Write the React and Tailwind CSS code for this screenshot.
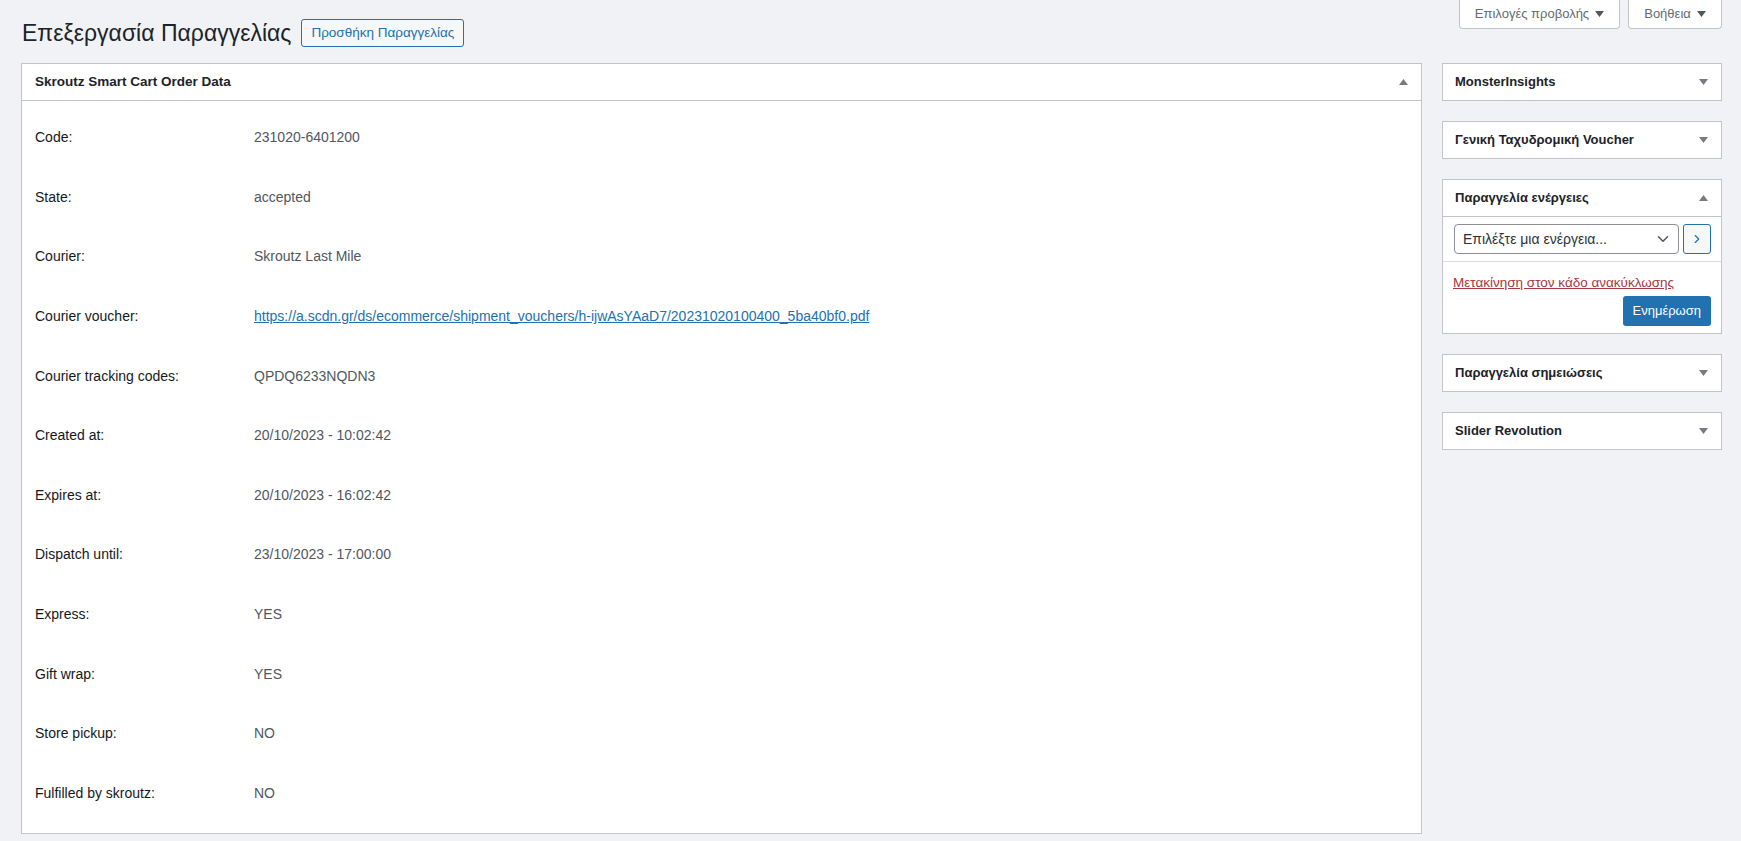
import React from 'react';
import { ChevronDown, ChevronRight } from 'lucide-react';

// Skroutz order data rows
const rows = [
  { label: 'Code:', value: '231020-6401200' },
  { label: 'State:', value: 'accepted' },
  { label: 'Courier:', value: 'Skroutz Last Mile' },
  {
    label: 'Courier voucher:',
    value: 'https://a.scdn.gr/ds/ecommerce/shipment_vouchers/h-ijwAsYAaD7/20231020100400_5ba40bf0.pdf',
    link: true,
  },
  { label: 'Courier tracking codes:', value: 'QPDQ6233NQDN3' },
  { label: 'Created at:', value: '20/10/2023 - 10:02:42' },
  { label: 'Expires at:', value: '20/10/2023 - 16:02:42' },
  { label: 'Dispatch until:', value: '23/10/2023 - 17:00:00' },
  { label: 'Express:', value: 'YES' },
  { label: 'Gift wrap:', value: 'YES' },
  { label: 'Store pickup:', value: 'NO' },
  { label: 'Fulfilled by skroutz:', value: 'NO' },
];

const sideBoxes = ['MonsterInsights', 'Γενική Ταχυδρομική Voucher'];
const sideBoxesAfter = ['Παραγγελία σημειώσεις', 'Slider Revolution'];

function Triangle({ up = false, color = '#787c82' }) {
  return (
    <svg width="9" height="6" viewBox="0 0 9 6" className="block">
      {up ? <path d="M0 6 L4.5 0 L9 6 Z" fill={color} /> : <path d="M0 0 L9 0 L4.5 6 Z" fill={color} />}
    </svg>
  );
}

export default function App() {
  return (
    <div className="min-h-screen bg-[#f0f2f5] text-[#1d2327] pl-[21px] pr-[19px] font-['Liberation_Sans',Arial,sans-serif]">
      {/* HEADER ROW */}
      <div className="flex justify-between items-start">
        <div className="flex items-center pt-[19px] h-[47px]">
          <h1 className="text-[23px] leading-[28px] font-normal text-[#1d2327] ml-[1px]">Επεξεργασία Παραγγελίας</h1>
          <button className="ml-[10px] h-[28px] px-[9px] border border-[#2271b1] rounded-[3px] bg-[#f6f7f7] text-[#2271b1] text-[13.5px] leading-none">
            Προσθήκη Παραγγελίας
          </button>
        </div>
        <div className="flex gap-[8px]">
          <ScreenTab label="Επιλογές προβολής" w="w-[161px]" />
          <ScreenTab label="Βοήθεια" w="w-[94px]" />
        </div>
      </div>

      <div className="flex items-start mt-[16px]">
        {/* MAIN BOX */}
        <div className="flex-1 bg-white border border-[#c3c4c7]">
          <div className="h-[37px] flex items-center justify-between border-b border-[#c3c4c7] pl-[13px] pr-[13px]">
            <h2 className="text-[13.5px] font-bold text-[#1d2327]">Skroutz Smart Cart Order Data</h2>
            <Triangle up />
          </div>
          <div className="pt-[7px] pb-[10px] pl-[13px]">
            {rows.map((r) => (
              <div key={r.label} className="h-[59.6px] flex items-center text-[14px]">
                <span className="w-[219px] shrink-0 text-[#14181b]">{r.label}</span>
                {r.link ? (
                  <a href="#" className="text-[#2271b1] underline">{r.value}</a>
                ) : (
                  <span className="text-[#50575e]">{r.value}</span>
                )}
              </div>
            ))}
          </div>
        </div>

        {/* SIDEBAR */}
        <div className="w-[280px] shrink-0 ml-[20px] flex flex-col gap-[20px]">
          {sideBoxes.map((t) => (
            <SideBox key={t} title={t} />
          ))}

          <div className="bg-white border border-[#c3c4c7]">
            <div className="h-[37px] flex items-center justify-between border-b border-[#c3c4c7] pl-[12px] pr-[13px]">
              <h2 className="text-[13px] font-bold">Παραγγελία ενέργειες</h2>
              <Triangle up />
            </div>
            <div className="flex items-center gap-[4px] pl-[11px] pr-[10px] py-[7px] border-b border-[#dcdcde]">
              <div className="flex-1 h-[30px] border border-[#8c8f94] rounded-[4px] flex items-center justify-between pl-[8px] pr-[6px] text-[14px] text-[#2c3338]">
                <span>Επιλέξτε μια ενέργεια...</span>
                <ChevronDown size={18} strokeWidth={2} className="text-[#50575e]" />
              </div>
              <button className="w-[28px] h-[30px] border border-[#2271b1] rounded-[3px] bg-[#f6f7f7] flex items-center justify-center text-[#2271b1]">
                <ChevronRight size={14} strokeWidth={2} />
              </button>
            </div>
            <div className="pl-[10px] pr-[10px] pt-[12px] pb-[7px]">
              <a href="#" className="block text-[13.5px] leading-[18px] text-[#a8383b] underline">Μετακίνηση στον κάδο ανακύκλωσης</a>
              <div className="flex justify-end mt-[4px]">
                <button className="h-[30px] px-[10px] rounded-[3px] bg-[#2271b1] text-white text-[13px]">Ενημέρωση</button>
              </div>
            </div>
          </div>

          {sideBoxesAfter.map((t) => (
            <SideBox key={t} title={t} />
          ))}
        </div>
      </div>
    </div>
  );
}

function SideBox({ title }) {
  return (
    <div className="bg-white border border-[#c3c4c7] h-[38px] flex items-center justify-between pl-[12px] pr-[13px]">
      <h2 className="text-[13px] font-bold text-[#1d2327]">{title}</h2>
      <Triangle />
    </div>
  );
}

function ScreenTab({ label, w }) {
  return (
    <button className={`${w} h-[29px] bg-white border border-t-0 border-[#c3c4c7] rounded-b-[4px] flex items-center justify-center gap-[6px] text-[13px] text-[#646970]`}>
      <span>{label}</span>
      <Triangle color="#50575e" />
    </button>
  );
}
